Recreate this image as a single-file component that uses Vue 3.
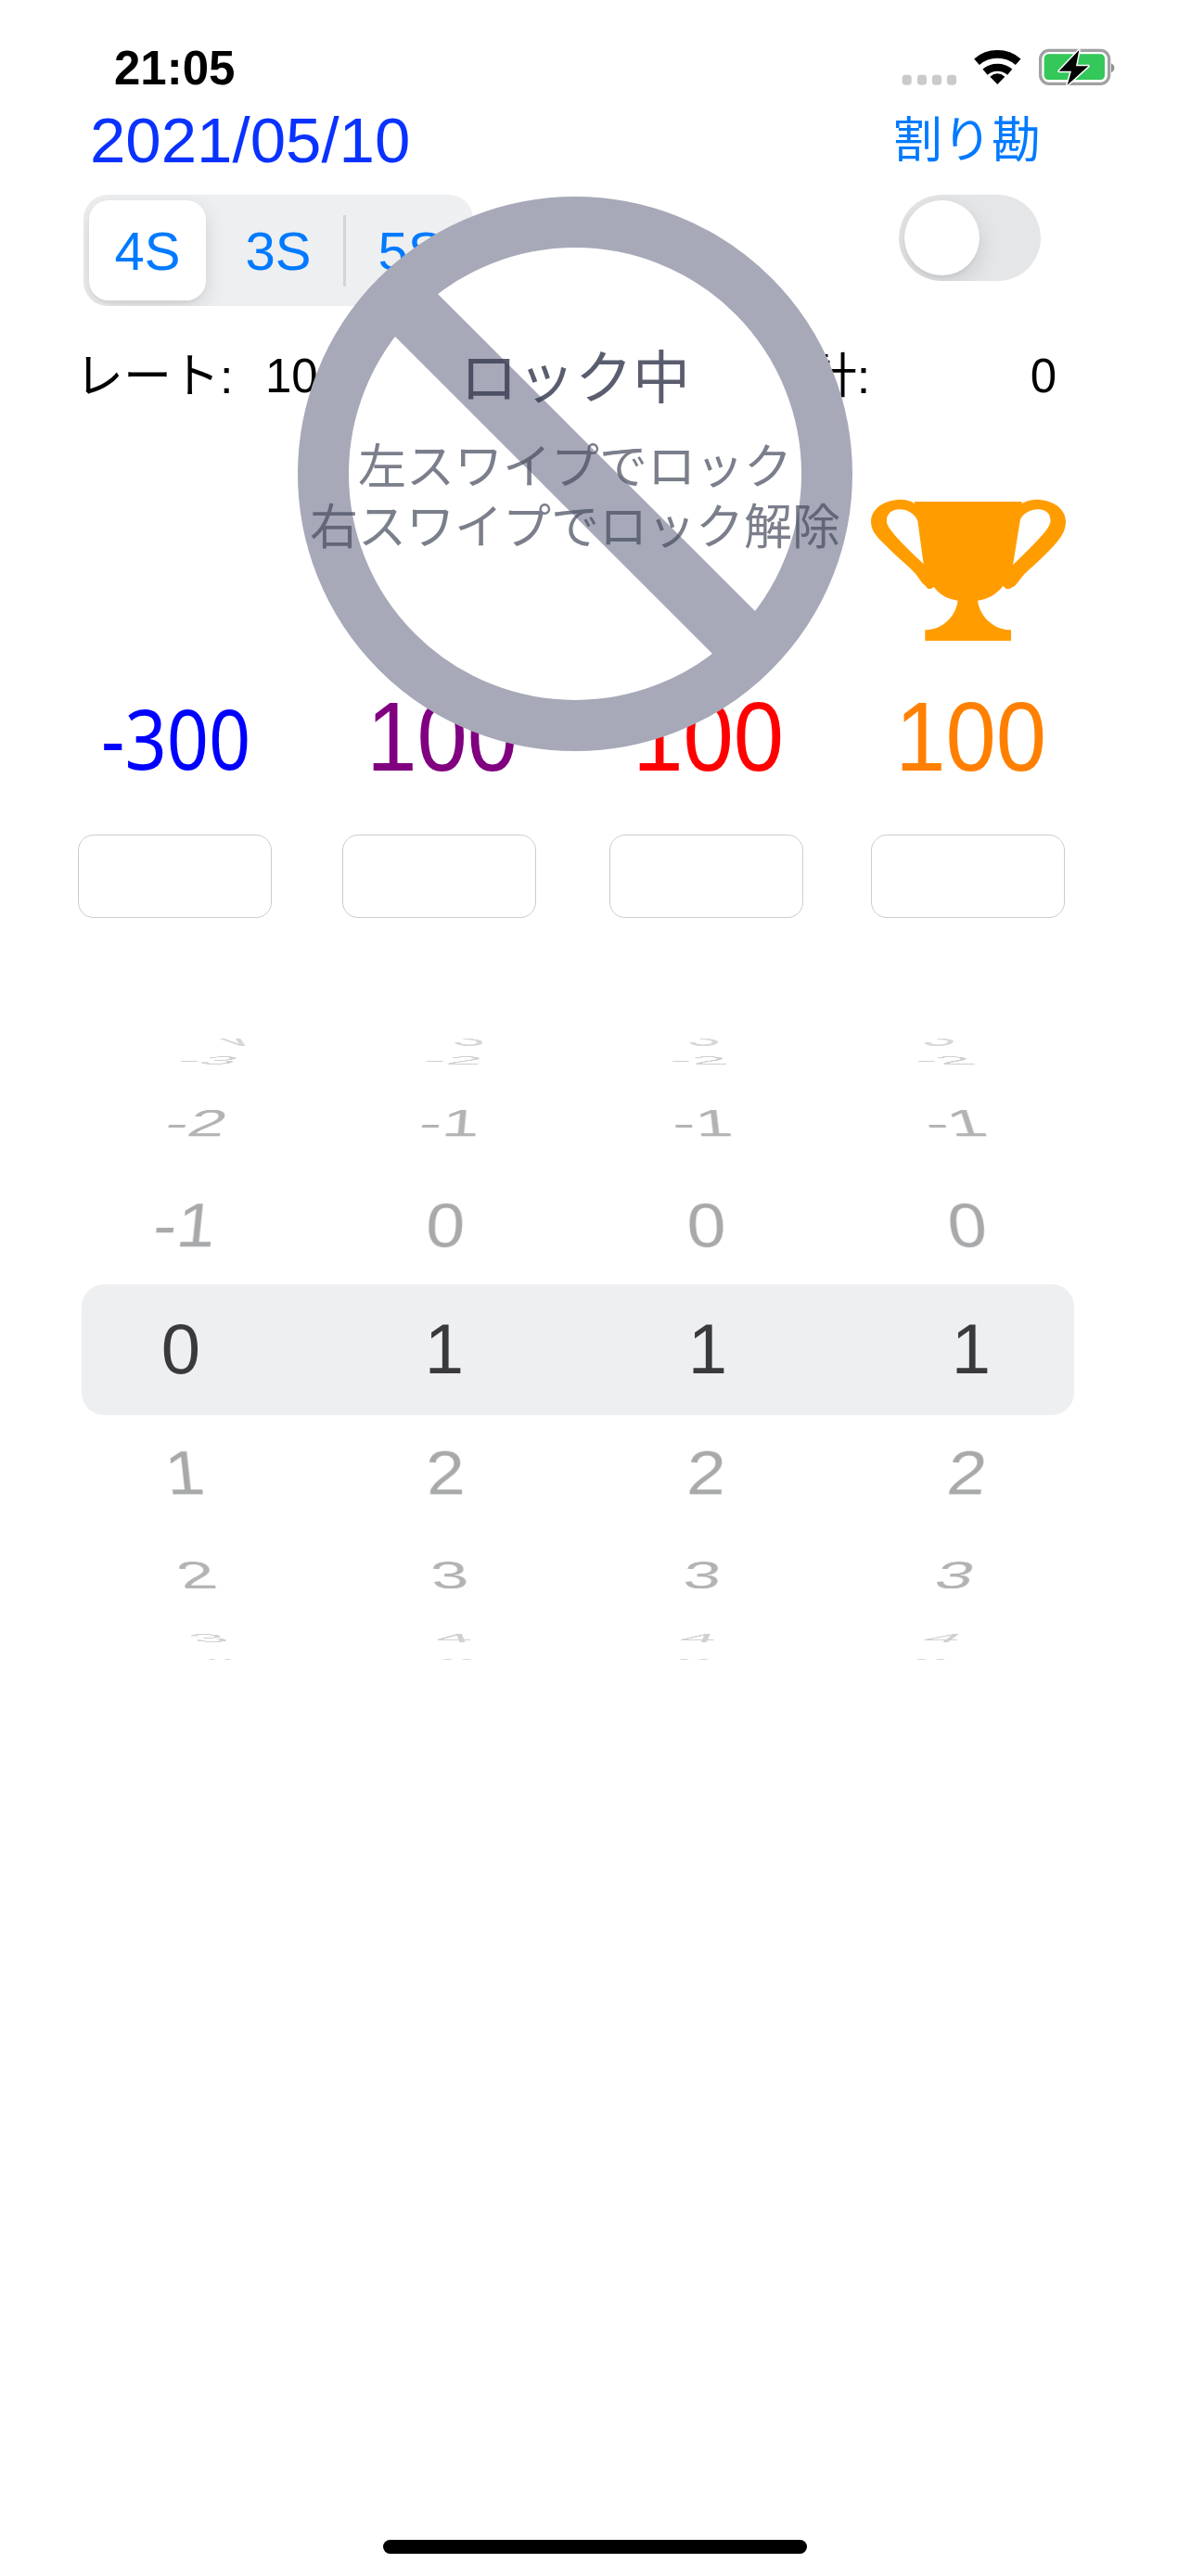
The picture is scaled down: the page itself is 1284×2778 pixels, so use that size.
<script setup>
const scores = [
  { text: '-300', cls: 'blue' },
  { text: '100', cls: 'purple' },
  { text: '100', cls: 'red' },
  { text: '100', cls: 'orange' },
]
const offsets = [-4, -3, -2, -1, 0, 1, 2, 3, 4]
const wheels = [0, 1, 1, 1].map((center) =>
  offsets.map((o) => ({ value: center + o, cls: 'at' + (o < 0 ? 'm' + -o : o) })),
)
</script>

<template>
  <div class="page">
    <header class="status">
      <span class="time">21:05</span>
      <div class="status-icons">
        <svg class="status-svg" width="250" height="60" viewBox="0 0 750 180">
          <rect x="38" y="122" width="30" height="33" rx="10" fill="#c9cacc" />
          <rect x="87" y="122" width="30" height="33" rx="10" fill="#c9cacc" />
          <rect x="135" y="122" width="30" height="33" rx="10" fill="#c9cacc" />
          <rect x="183" y="122" width="30" height="33" rx="10" fill="#c9cacc" />
          <path d="M279 80A103 103 0 0 1 413 80" fill="none" stroke="#000" stroke-width="26" />
          <path d="M306 113A62 62 0 0 1 386 113" fill="none" stroke="#000" stroke-width="24" />
          <path d="M322 128Q346 108 370 128L346 153Z" fill="#000" />
          <rect x="485" y="43" width="222" height="108" rx="28" fill="#fff" stroke="#a0a1a3" stroke-width="10" />
          <rect x="497" y="55" width="196" height="83" rx="14" fill="#34c759" />
          <path d="M714 85Q724 90 724 100Q724 110 714 115Z" fill="#8f9092" />
          <path d="M610 42L545 110H585L572 155L640 94H600Z" fill="#000" stroke="#fff" stroke-width="9" paint-order="stroke" stroke-linejoin="round" />
        </svg>
      </div>
    </header>

    <div class="title-row">
      <span class="date">2021/05/10</span>
      <span class="split-label">割り勘</span>
    </div>

    <div class="control-row">
      <div class="segments">
        <div class="segment active">4S</div>
        <div class="segment">3S</div>
        <i class="divider"></i>
        <div class="segment">5S</div>
      </div>
      <div class="toggle"><i class="knob"></i></div>
    </div>

    <div class="rate-row">
      <div class="rate-left">
        <span class="rate-label">レート:</span>
        <span>100</span>
      </div>
      <div class="rate-right">
        <span class="total-label">合計:</span>
        <span class="total-value">0</span>
      </div>
    </div>

    <div class="trophy-row">
      <svg class="trophy" width="230" height="170" viewBox="0 0 690 510">
        <path
          fill="#ff9d00"
          fill-rule="evenodd"
          d="M168 33H515V39C535 28 555 25 575 27C625 32 658 62 657 100C656 140 625 170 590 205C555 240 525 262 505 290C498 300 490 308 482 311C472 318 460 316 455 305C430 335 405 348 372 353C378 400 420 448 480 448V483H202V448C262 448 302 400 308 353C275 348 250 335 230 308C222 318 208 318 204 305C195 300 188 290 180 278C160 250 125 225 90 190C55 155 28 135 27 100C26 62 60 32 110 27C132 25 152 28 168 39ZM510 90C520 70 545 57 570 58C595 59 610 75 607 100C604 125 535 190 486 238ZM178 95C168 70 142 57 117 58C92 59 75 75 78 100C81 125 150 190 197 235Z"
        />
      </svg>
    </div>

    <div class="score-row">
      <div v-for="(s, i) in scores" :key="i" class="score" :class="s.cls">
        <span>{{ s.text }}</span>
      </div>
    </div>

    <div class="input-row">
      <div v-for="n in 4" :key="n" class="input-box"></div>
    </div>

    <div class="picker">
      <div class="band"></div>
      <div v-for="(wheel, i) in wheels" :key="i" class="wheel">
        <div v-for="item in wheel" :key="item.cls" class="wheel-item" :class="item.cls">{{ item.value }}</div>
      </div>
    </div>

    <div class="home-wrap"><i class="home"></i></div>

    <div class="lock">
      <svg class="lock-ring" width="598" height="598" viewBox="0 0 598 598">
        <circle cx="299" cy="299" r="271.5" fill="#fff" stroke="#a7a9b8" stroke-width="55" />
        <path d="M107 107L491 491" stroke="#a7a9b8" stroke-width="65" />
      </svg>
      <div class="lock-text">
        <div class="lock-title">ロック中</div>
        <div class="lock-line">左スワイプでロック</div>
        <div class="lock-line">右スワイプでロック解除</div>
      </div>
    </div>
  </div>
</template>

<style scoped>
.page {
  position: relative;
  width: 1284px;
  height: 2778px;
  display: flex;
  flex-direction: column;
  overflow: hidden;
  background: #fff;
  color: #000;
  font-family: "Liberation Sans", "Noto Sans CJK JP", sans-serif;
}
.status {
  height: 100px;
  flex: none;
  position: relative;
  padding-left: 123px;
}
.time {
  display: block;
  font-size: 51px;
  font-weight: 700;
  line-height: 60px;
  padding-top: 44px;
  height: 60px;
}
.status-icons {
  position: absolute;
  left: 960px;
  top: 40px;
}
.status-svg {
  display: block;
}
.title-row {
  height: 104px;
  margin-bottom: 6px;
  flex: none;
  display: flex;
  justify-content: space-between;
  padding: 0 162px 0 97px;
  line-height: 104px;
}
.date {
  font-size: 69px;
  color: #0a32ff;
}
.split-label {
  font-size: 53px;
  color: #007aff;
}
.control-row {
  flex: none;
  display: flex;
  justify-content: space-between;
  align-items: flex-start;
  padding: 0 162px 0 90px;
}
.segments {
  width: 420px;
  height: 120px;
  box-sizing: border-box;
  padding: 6px;
  border-radius: 26px;
  background: #eeeff1;
  display: flex;
  align-items: center;
  position: relative;
  overflow: hidden;
}
.segment {
  width: 136px;
  height: 108px;
  flex: none;
  display: flex;
  align-items: center;
  justify-content: center;
  font-size: 58px;
  color: #007aff;
  margin-left: 10px;
}
.segment:last-child {
  margin-left: 2px;
}
.segment.active {
  width: 126px;
  margin-left: 0;
  background: #fff;
  border-radius: 21px;
  box-shadow: 0 8px 24px rgba(0, 0, 0, 0.12), 0 3px 3px rgba(0, 0, 0, 0.04);
}
.divider {
  width: 3px;
  height: 77px;
  background: #d4d5d8;
  flex: none;
  margin-left: 2px;
}
.toggle {
  width: 153px;
  height: 93px;
  box-sizing: border-box;
  padding: 6px;
  border-radius: 47px;
  background: #e5e6e8;
  overflow: hidden;
}
.knob {
  display: block;
  width: 81px;
  height: 81px;
  border-radius: 50%;
  background: #fff;
  box-shadow: 0 8px 24px rgba(0, 0, 0, 0.12), 0 3px 3px rgba(0, 0, 0, 0.04);
}
.rate-row {
  flex: none;
  height: 76px;
  margin-top: 38px;
  display: flex;
  justify-content: space-between;
  padding: 0 145px 0 81px;
  font-size: 51px;
  line-height: 76px;
}
.rate-left,
.rate-right {
  display: flex;
}
.rate-label {
  width: 205px;
  font-size: 52px;
}
.total-label {
  width: 291px;
  font-size: 52px;
}
.trophy-row {
  flex: none;
  margin-top: 86px;
  height: 170px;
  padding-left: 930px;
}
.trophy {
  display: block;
}
.score-row {
  flex: none;
  height: 190px;
  margin-bottom: 10px;
  display: grid;
  grid-template-columns: 287px 287px 283px 209px;
  padding-left: 85px;
  align-items: center;
  font-size: 105px;
  line-height: 120px;
}
.score {
  width: 209px;
  text-align: center;
}
.score span {
  display: inline-block;
  transform: scaleX(0.93);
}
.blue {
  color: #0000ff;
  font-family: "Noto Sans", sans-serif;
  font-size: 90px;
}
.score.blue span {
  transform: scaleX(0.88);
}
.purple {
  color: #800080;
}
.red {
  color: #ff0000;
}
.orange {
  color: #ff8000;
}
.input-row {
  flex: none;
  height: 90px;
  display: grid;
  grid-template-columns: 285px 288px 282px 210px;
  padding-left: 84px;
}
.input-box {
  width: 209px;
  height: 90px;
  box-sizing: border-box;
  border: 1px solid #cbcccd;
  border-radius: 17px;
  background: #fff;
}
.picker {
  flex: none;
  position: relative;
  margin: 130px 0 0 53px;
  width: 1136px;
  height: 670px;
  display: grid;
  grid-template-columns: repeat(4, 284px);
  overflow: hidden;
  perspective: 1700px;
  perspective-origin: 50% 50%;
}
.band {
  position: absolute;
  left: 35px;
  top: 265px;
  width: 1070px;
  height: 141px;
  border-radius: 24px;
  background: #eeeff1;
}
.wheel {
  display: grid;
  place-items: center;
  height: 670px;
  transform-style: preserve-3d;
}
.wheel-item {
  grid-area: 1 / 1;
  width: 284px;
  height: 140px;
  line-height: 140px;
  text-align: center;
  font-size: 76px;
}
.at0 {
  color: #3a3a3c;
}
.atm1 {
  color: #a8a9ab;
  transform: translate3d(0, -135px, -17px) rotateX(23deg);
}
.at1 {
  color: #a8a9ab;
  transform: translate3d(0, 135px, -17px) rotateX(-23deg);
}
.atm2 {
  color: #b2b3b5;
  transform: translate3d(0, -254px, -71px) rotateX(48deg);
}
.at2 {
  color: #b2b3b5;
  transform: translate3d(0, 254px, -71px) rotateX(-48deg);
}
.atm3 {
  color: #cfd0d2;
  transform: translate3d(0, -335px, -128px) rotateX(70deg);
}
.at3 {
  color: #cfd0d2;
  transform: translate3d(0, 335px, -128px) rotateX(-70deg);
}
.atm4 {
  color: #d6d7d9;
  transform: translate3d(0, -372px, -190px) rotateX(97deg);
}
.at4 {
  color: #d6d7d9;
  transform: translate3d(0, 372px, -190px) rotateX(-97deg);
}
.home-wrap {
  margin-top: auto;
  padding: 0 0 24px 413px;
}
.home {
  display: block;
  width: 457px;
  height: 15px;
  border-radius: 8px;
  background: #000;
}
.lock {
  position: absolute;
  left: 321px;
  top: 212px;
  width: 598px;
  height: 598px;
}
.lock-ring {
  display: block;
}
.lock-text {
  position: absolute;
  left: -30px;
  right: -30px;
  top: 162px;
  text-align: center;
  color: rgba(72, 77, 95, 0.72);
  filter: blur(0.6px);
}
.lock-title {
  font-size: 62px;
  line-height: 70px;
  margin-bottom: 28px;
  color: rgba(60, 65, 85, 0.85);
}
.lock-line {
  font-size: 52px;
  line-height: 65px;
}
</style>
